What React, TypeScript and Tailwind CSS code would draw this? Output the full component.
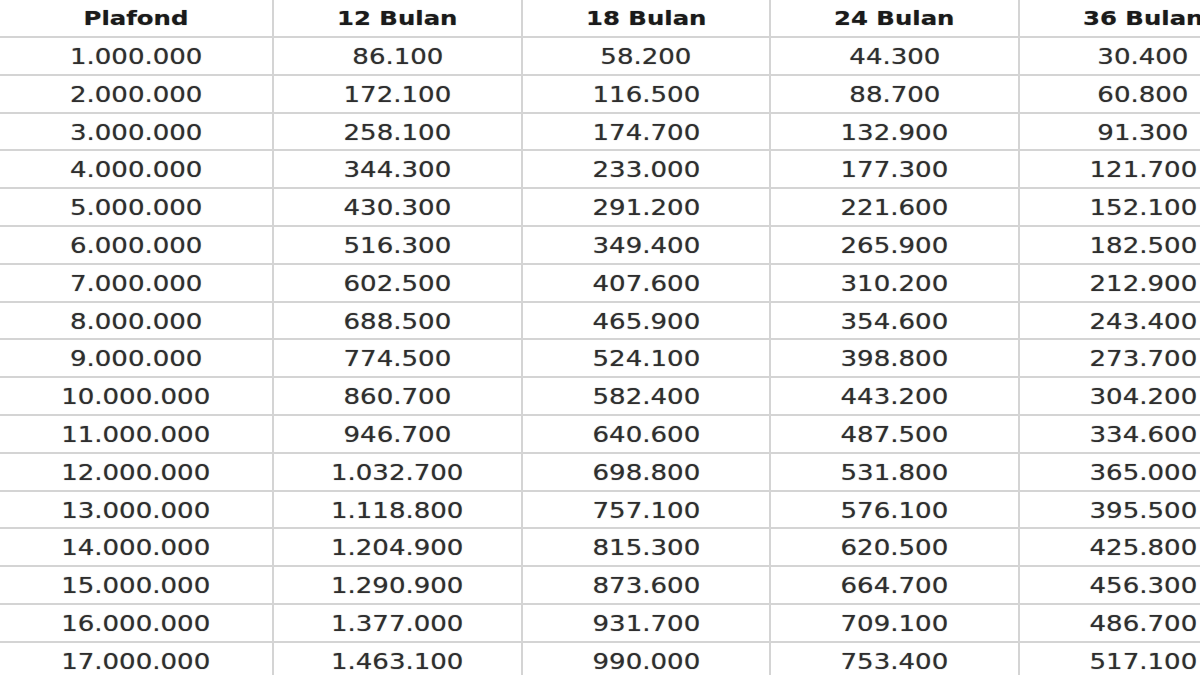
const HEADERS = ["Plafond", "12 Bulan", "18 Bulan", "24 Bulan", "36 Bulan"];

const ROWS: string[][] = [
  ["1.000.000", "86.100", "58.200", "44.300", "30.400"],
  ["2.000.000", "172.100", "116.500", "88.700", "60.800"],
  ["3.000.000", "258.100", "174.700", "132.900", "91.300"],
  ["4.000.000", "344.300", "233.000", "177.300", "121.700"],
  ["5.000.000", "430.300", "291.200", "221.600", "152.100"],
  ["6.000.000", "516.300", "349.400", "265.900", "182.500"],
  ["7.000.000", "602.500", "407.600", "310.200", "212.900"],
  ["8.000.000", "688.500", "465.900", "354.600", "243.400"],
  ["9.000.000", "774.500", "524.100", "398.800", "273.700"],
  ["10.000.000", "860.700", "582.400", "443.200", "304.200"],
  ["11.000.000", "946.700", "640.600", "487.500", "334.600"],
  ["12.000.000", "1.032.700", "698.800", "531.800", "365.000"],
  ["13.000.000", "1.118.800", "757.100", "576.100", "395.500"],
  ["14.000.000", "1.204.900", "815.300", "620.500", "425.800"],
  ["15.000.000", "1.290.900", "873.600", "664.700", "456.300"],
  ["16.000.000", "1.377.000", "931.700", "709.100", "486.700"],
  ["17.000.000", "1.463.100", "990.000", "753.400", "517.100"],
];

const COLS = "grid grid-cols-[274px_249px_248px_249px_248px]";

export default function App() {
  return (
    <div className="w-[1200px] h-[675px] overflow-hidden bg-white font-['DejaVu_Sans',sans-serif]">
      <div className="w-[1268px]">
        <div className={`${COLS} h-[38px]`}>
          {HEADERS.map((h) => (
            <div
              key={h}
              className="flex items-center justify-center pt-[2px] border-r-2 border-b-2 border-[#d4d4d4] text-[19.5px] font-bold text-[#1a1a1a] [text-shadow:0_0_1px_rgba(0,0,0,0.45)]"
            >
              <span className="inline-block scale-x-[1.25]">{h}</span>
            </div>
          ))}
        </div>
        {ROWS.map((row) => (
          <div key={row[0]} className={`${COLS} h-[37.8px]`}>
            {row.map((v, i) => (
              <div
                key={i}
                className="flex items-center justify-center pt-[3px] border-r-2 border-b-2 border-[#d4d4d4] text-[20.5px] text-[#2e2e2e] [text-shadow:0_0_1px_rgba(0,0,0,0.45)]"
              >
                <span className="inline-block scale-x-[1.27]">{v}</span>
              </div>
            ))}
          </div>
        ))}
      </div>
    </div>
  );
}
